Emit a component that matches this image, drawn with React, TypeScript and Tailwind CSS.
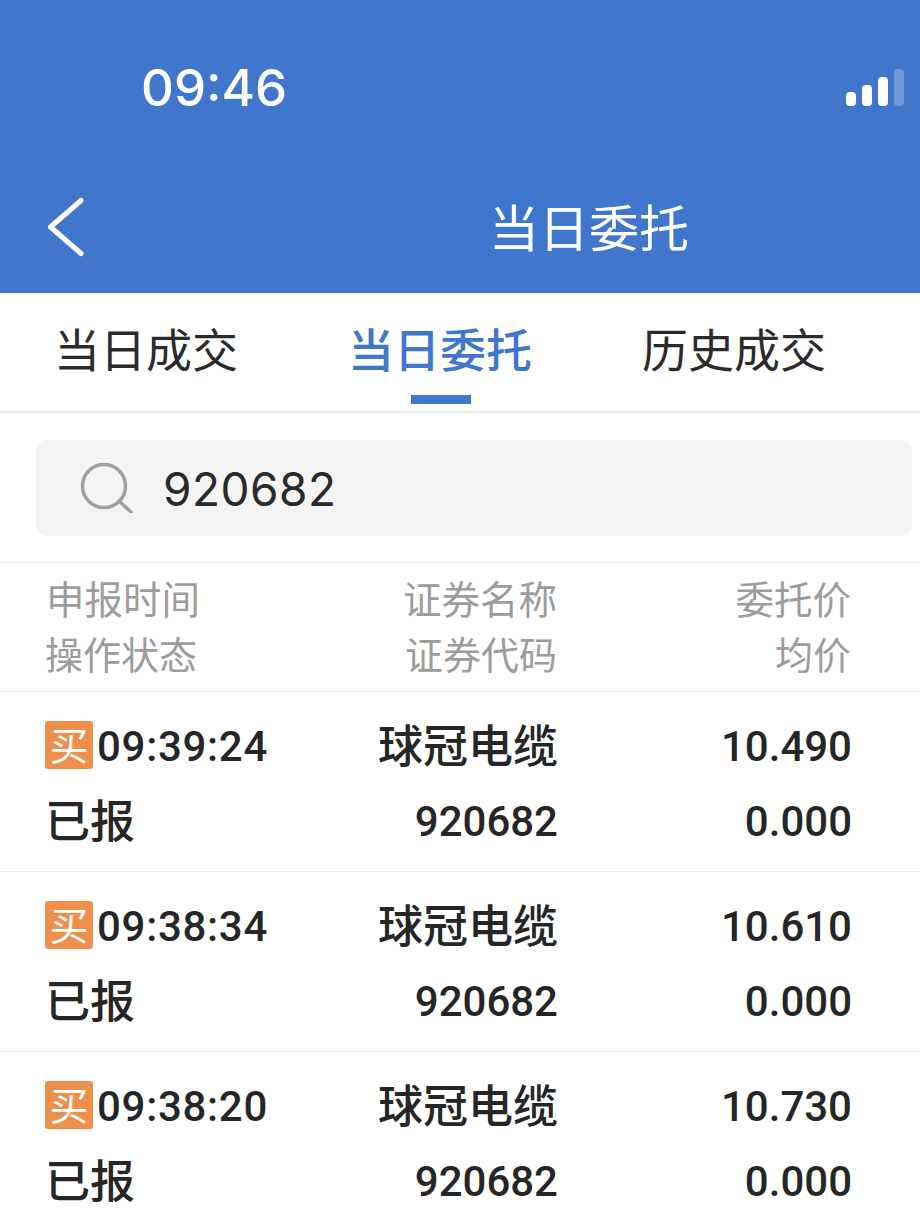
const cjk = "font-['Noto_Sans_CJK_SC',sans-serif]"

const orders = [
  { time: '09:39:24', price: '10.490' },
  { time: '09:38:34', price: '10.610' },
  { time: '09:38:20', price: '10.730' },
]

const App = () => {
  return (
    <div className={`w-[920px] h-[1227px] overflow-hidden bg-white ${cjk}`}>
      {/* Blue header */}
      <div className="h-[293px] bg-[#4077cd] text-white">
        <div className="h-[176px] flex items-start justify-between">
          <div className="ml-[141px] mt-[58px] text-[51px] leading-[60px] font-medium font-['Inter',sans-serif]">09:46</div>
          <div className="mt-[69px] mr-[16px] flex items-end gap-[6px]">
            <div className="w-[10px] h-[14px] rounded-[4px] bg-white"></div>
            <div className="w-[10px] h-[21px] rounded-[4px] bg-white"></div>
            <div className="w-[10px] h-[29px] rounded-[4px] bg-white"></div>
            <div className="w-[10px] h-[37px] rounded-[4px] bg-white/25"></div>
          </div>
        </div>
        <div className="relative flex items-center justify-center h-[100px]">
          <svg className="absolute left-[44px] top-[20px]" width="44" height="66" viewBox="0 0 44 66" fill="none">
            <path d="M37 4.5 L6.5 31 L37 57.5" stroke="white" strokeWidth="5" strokeLinecap="round" strokeLinejoin="round" />
          </svg>
          <div className="ml-[258px] -mt-[2px] text-[50px] leading-[54px]">当日委托</div>
        </div>
      </div>

      {/* Tabs */}
      <div className="h-[120px] border-b-2 border-[#ececec] grid grid-cols-[294px_294px_332px] text-[46px] text-[#2b2b2b]">
        <div className="pt-[24px] pl-[54px] leading-[60px]">当日成交</div>
        <div className="pt-[24px] pl-[54px] leading-[60px] text-[#3f77cc] font-medium relative">
          当日委托
          <div className="absolute left-[117px] top-[102px] w-[60px] h-[9px] bg-[#3f77cc]"></div>
        </div>
        <div className="pt-[24px] pl-[54px] leading-[60px]">历史成交</div>
      </div>

      {/* Search */}
      <div className="h-[150px] border-b border-[#ececec] pt-[27px] pl-[36px] pr-[8px]">
        <div className="h-[96px] rounded-[10px] bg-[#f4f4f4] flex items-center">
          <svg className="ml-[44px]" width="54" height="50" viewBox="0 0 54 50" fill="none" stroke="#a0a0a0" strokeWidth="3.5">
            <circle cx="24" cy="23" r="21.5" />
            <path d="M39 38 L51 49" strokeLinecap="round" />
          </svg>
          <div className="ml-[29px] mt-[2px] text-[46px] tracking-[0.5px] leading-[60px] text-[#2a2a2a] font-['Inter',sans-serif]">920682</div>
        </div>
      </div>

      {/* Column titles */}
      <div className="h-[129px] border-b border-[#ececec] pl-[44px] pt-[7px] leading-[55px] text-[#9c9c9c] grid grid-cols-[300px_213px_294px]">
        <div>
          <div className="pl-[2px] text-[38.5px]">申报时间</div>
          <div className="pl-[1px] text-[38px]">操作状态</div>
        </div>
        <div className="text-right">
          <div className="text-[38.5px]">证券名称</div>
          <div className="text-[38px]">证券代码</div>
        </div>
        <div className="text-right">
          <div className="text-[38.5px]">委托价</div>
          <div className="text-[38px]">均价</div>
        </div>
      </div>

      {/* Order rows */}
      {orders.map((order, index) => (
        <div key={index} className="h-[180px] border-b border-[#ececec] pl-[45px] pt-[25px] grid grid-cols-[301px_212px_294px] text-[#262626] font-medium">
          <div>
            <div className="h-[60px] flex items-center">
              <div className="w-[48px] h-[48px] -mt-[4px] rounded-[3px] bg-[#ee8f4c] text-white text-[39px] leading-[44px] text-center font-normal">买</div>
              <div className="ml-[4px] text-[42px] tracking-[0.7px] leading-[60px] font-['Roboto',sans-serif]">{order.time}</div>
            </div>
            <div className="mt-[15px] h-[60px] text-[45px] leading-[54px]">已报</div>
          </div>
          <div className="text-right">
            <div className="h-[60px] text-[45px] leading-[54px]">球冠电缆</div>
            <div className="mt-[15px] text-[42px] leading-[60px] font-['Roboto',sans-serif]">920682</div>
          </div>
          <div className="text-right text-[42px] leading-[60px] font-['Roboto',sans-serif]">
            <div>{order.price}</div>
            <div className="mt-[15px]">0.000</div>
          </div>
        </div>
      ))}
    </div>
  )
}

export default App
